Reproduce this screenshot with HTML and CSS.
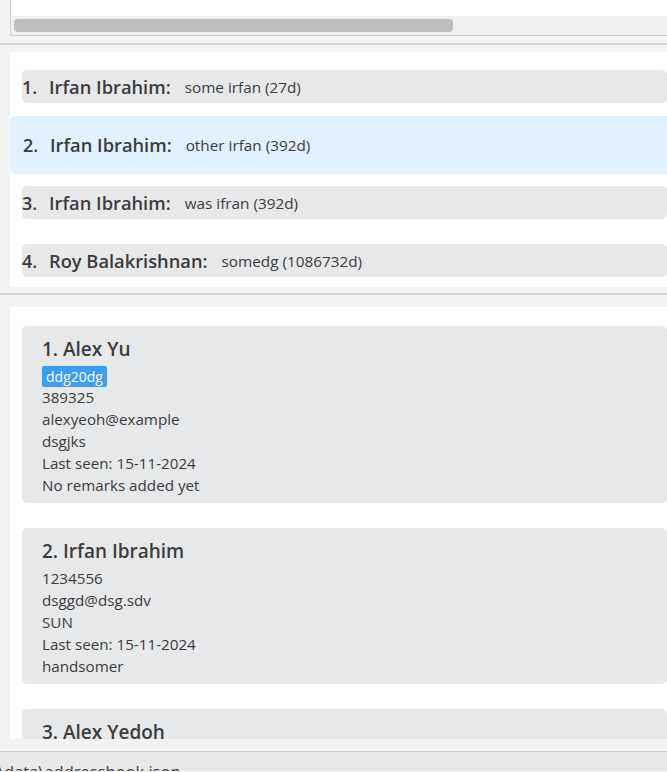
FILE: index.html
```html
<!DOCTYPE html>
<html>
<head>
<meta charset="utf-8">
<link rel="stylesheet" href="styles.css">
</head>
<body>
<div class="top">
  <div class="track"><div class="thumb"></div></div>
</div>
<div class="sep sep-a"></div>
<div class="panel list-panel">
  <div class="cell">
    <div class="row"><span class="idx">1.</span><span class="nm">Irfan Ibrahim:</span><span class="sub">some irfan (27d)</span></div>
  </div>
  <div class="cell selected">
    <div class="row"><span class="idx">2.</span><span class="nm">Irfan Ibrahim:</span><span class="sub">other irfan (392d)</span></div>
  </div>
  <div class="cell">
    <div class="row"><span class="idx">3.</span><span class="nm">Irfan Ibrahim:</span><span class="sub">was ifran (392d)</span></div>
  </div>
  <div class="cell">
    <div class="row"><span class="idx">4.</span><span class="nm">Roy Balakrishnan:</span><span class="sub">somedg (1086732d)</span></div>
  </div>
</div>
<div class="sep sep-b"></div>
<div class="panel cards-panel">
  <div class="card">
    <div class="title">1. Alex Yu</div>
    <div class="tags"><span class="tag">ddg20dg</span></div>
    <div class="line">389325</div>
    <div class="line">alexyeoh@example</div>
    <div class="line">dsgjks</div>
    <div class="line">Last seen: 15-11-2024</div>
    <div class="line">No remarks added yet</div>
  </div>
  <div class="card">
    <div class="title">2. Irfan Ibrahim</div>
    <div class="line">1234556</div>
    <div class="line">dsggd@dsg.sdv</div>
    <div class="line">SUN</div>
    <div class="line">Last seen: 15-11-2024</div>
    <div class="line">handsomer</div>
  </div>
  <div class="card">
    <div class="title">3. Alex Yedoh</div>
    <div class="line">98765432</div>
    <div class="line">alex@example.com</div>
  </div>
</div>
<div class="status"><span class="path">\data\addressbook.json</span></div>
</body>
</html>
```
FILE: styles.css
```css
html, body {
  margin: 0;
  padding: 0;
}
body {
  width: 667px;
  height: 772px;
  overflow: hidden;
  background: #f3f3f3;
  font-family: "Open Sans", "Noto Sans", sans-serif;
  color: #3c3c3c;
}
.top {
  margin-left: 10px;
  height: 35px;
  background: #ffffff;
  border-left: 1px solid #cfcfcf;
  border-bottom: 1px solid #cfcfcf;
  overflow: hidden;
}
.track {
  margin-top: 16px;
  height: 19px;
  background: #f0f0f0;
  padding: 3px 0 0 3px;
  box-sizing: border-box;
}
.thumb {
  width: 439px;
  height: 13px;
  background: #bfbfbf;
  border-radius: 4px;
}
.sep {
  height: 2px;
  background: #d4d4d4;
}
.sep-a {
  margin-top: 7px;
  margin-bottom: 7px;
}
.sep-b {
  margin-top: 6px;
  margin-bottom: 12px;
}
.panel {
  margin-left: 10px;
  background: #ffffff;
  overflow: hidden;
}
.list-panel {
  height: 229px;
  padding-top: 6px;
}
.cell {
  height: 58px;
  padding: 12px 0 13px 12px;
  box-sizing: border-box;
}
.row {
  height: 33px;
  background: #e7e8ea;
  border-radius: 5px;
  display: flex;
  align-items: center;
  white-space: nowrap;
}
.cell.selected {
  background: #e3f0fd;
  border-radius: 5px 0 0 5px;
  padding-left: 13px;
}
.cell.selected .row {
  background: transparent;
}
.idx {
  font-weight: 600;
  font-size: 18px;
  width: 27px;
}
.nm {
  font-weight: 600;
  font-size: 18.3px;
}
.sub {
  font-size: 15.3px;
  margin-left: 14px;
}
.cards-panel {
  height: 413px;
  padding-top: 19px;
}
.card {
  margin-left: 12px;
  margin-bottom: 25px;
  background: #e7e8ea;
  border-radius: 5px;
  padding: 7px 0 6px 20px;
}
.title {
  height: 33px;
  line-height: 33px;
  font-size: 19px;
  font-weight: 600;
}
.tags {
  height: 21px;
  display: flex;
}
.tag {
  background: #3d9cf6;
  color: #ffffff;
  font-size: 14px;
  line-height: 21px;
  padding: 0 4px;
  border-radius: 2px;
}
.line {
  height: 22px;
  line-height: 21px;
  font-size: 15.2px;
}
.status {
  margin-top: 12px;
  height: 19px;
  border-top: 1px solid #d0d0d0;
  background: #e8e8e8;
  overflow: hidden;
  white-space: nowrap;
}
.path {
  display: block;
  margin-left: -2px;
  padding-top: 10px;
  font-size: 16.5px;
  line-height: 20px;
  color: #3c3c3c;
}
```
